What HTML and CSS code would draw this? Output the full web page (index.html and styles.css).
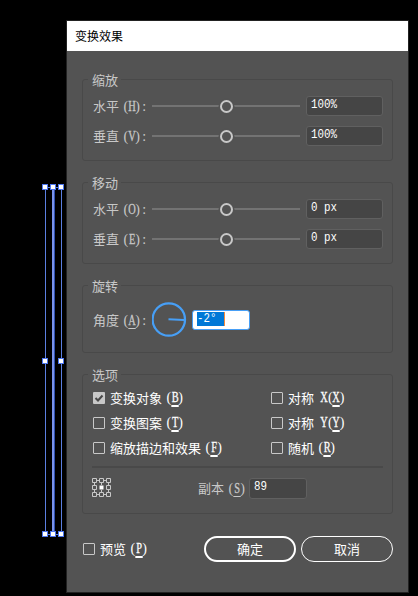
FILE: index.html
```html
<!DOCTYPE html>
<html lang="zh-CN">
<head>
<meta charset="utf-8">
<title>变换效果</title>
<link rel="stylesheet" href="styles.css">
</head>
<body>
<svg class="artwork" width="67" height="596" viewBox="0 0 67 596">
  <path d="M45.5 187V534M61.5 187V534M45 187.5H62M45 534.5H62" stroke="#5b7fe0" fill="none"/>
  <path d="M53 187V534" stroke="#7b93ea" stroke-width="2"/>
  <path d="M54.5 187V534" stroke="#2f4fae"/>
  <g fill="#fff" stroke="#4d76ee">
    <rect x="42.5" y="184.5" width="5" height="5"/><rect x="50.5" y="184.5" width="5" height="5"/><rect x="58.5" y="184.5" width="5" height="5"/>
    <rect x="42.5" y="358.5" width="5" height="5"/><rect x="58.5" y="358.5" width="5" height="5"/>
    <rect x="42.5" y="531.5" width="5" height="5"/><rect x="50.5" y="531.5" width="5" height="5"/><rect x="58.5" y="531.5" width="5" height="5"/>
  </g>
</svg>
<main class="dialog">
  <header class="title">变换效果</header>
  <div class="body">
    <section class="group scale">
      <h2 class="legend">缩放</h2>
      <div class="row"><label class="name">水平<span class="key">(<b>H</b>)<i>:</i></span></label><div class="slider"><i class="knob"></i></div><div class="field"><span class="mono">100%</span></div></div>
      <div class="row"><label class="name">垂直<span class="key">(<b>V</b>)<i>:</i></span></label><div class="slider"><i class="knob"></i></div><div class="field"><span class="mono">100%</span></div></div>
    </section>
    <section class="group move">
      <h2 class="legend">移动</h2>
      <div class="row"><label class="name">水平<span class="key">(<b>O</b>)<i>:</i></span></label><div class="slider"><i class="knob"></i></div><div class="field"><span class="mono">0 px</span></div></div>
      <div class="row"><label class="name">垂直<span class="key">(<b>E</b>)<i>:</i></span></label><div class="slider"><i class="knob"></i></div><div class="field"><span class="mono">0 px</span></div></div>
    </section>
    <section class="group rotate">
      <h2 class="legend">旋转</h2>
      <div class="row">
        <label class="name">角度<span class="key">(<b class="hot">A</b>)<i>:</i></span></label>
        <svg class="dial" width="36" height="36" viewBox="0 0 36 36" fill="none" stroke="#479ff6" stroke-width="2.3"><circle cx="16.8" cy="17.5" r="16.2"/><path d="M16.5 17.3L32 17.9" stroke-width="2"/></svg>
        <div class="field active"><span class="selection"><span class="mono">-2°</span></span></div>
      </div>
    </section>
    <section class="group options">
      <h2 class="legend">选项</h2>
      <div class="checks">
        <label class="check"><svg class="box" width="12" height="12" viewBox="0 0 12 12"><rect width="12" height="12" rx="1" fill="#c8c8c8"/><path d="M2.5 6L5 8.5L9.5 3.5" fill="none" stroke="#484848" stroke-width="2"/></svg>变换对象<span class="key">(<b class="hot">B</b>)</span></label>
        <label class="check"><i class="box empty"></i>对称<span class="key wide"><b>X</b>(<b class="hot">X</b>)</span></label>
        <label class="check"><i class="box empty"></i>变换图案<span class="key">(<b class="hot">T</b>)</span></label>
        <label class="check"><i class="box empty"></i>对称<span class="key wide"><b>Y</b>(<b class="hot">Y</b>)</span></label>
        <label class="check"><i class="box empty"></i>缩放描边和效果<span class="key">(<b class="hot">F</b>)</span></label>
        <label class="check"><i class="box empty"></i>随机<span class="key">(<b class="hot">R</b>)</span></label>
      </div>
      <div class="rule"></div>
      <div class="copies">
        <svg class="anchor" width="19" height="19" viewBox="0 0 19 19" fill="none" stroke="#c8c8c8">
          <path d="M5 2.5h2M12 2.5h2M5 16.5h2M12 16.5h2M2.5 5v2M2.5 12v2M16.5 5v2M16.5 12v2M9.5 5v2M9.5 12v2"/>
          <path d="M.5.5h4v4h-4zM7.5.5h4v4h-4zM14.5.5h4v4h-4zM.5 7.5h4v4h-4zM14.5 7.5h4v4h-4zM.5 14.5h4v4h-4zM7.5 14.5h4v4h-4zM14.5 14.5h4v4h-4z"/>
          <path d="M7.5 7.5h4v4h-4z" fill="#fff" stroke="none"/>
        </svg>
        <label class="copy-name">副本<span class="key">(<b class="hot">S</b>)</span></label>
        <div class="field"><span class="mono">89</span></div>
      </div>
    </section>
    <footer class="footer">
      <label class="check"><i class="box empty"></i>预览<span class="key">(<b class="hot">P</b>)</span></label>
      <button class="button primary">确定</button>
      <button class="button">取消</button>
    </footer>
  </div>
</main>
</body>
</html>
```
FILE: styles.css
```css
* { box-sizing: border-box; }
body {
  margin: 0;
  width: 418px;
  height: 596px;
  overflow: hidden;
  background: #000;
  padding: 20px 0 0 66px;
  font: 13px/18px "Noto Sans CJK SC", sans-serif;
  color: #c8c8c8;
}
.artwork { position: absolute; left: 0; top: 0; }
.dialog {
  width: 343px;
  height: 573px;
  border: 1px solid #222;
  background: #535353;
}
.title {
  height: 30px;
  padding-left: 8px;
  background: #fff;
  color: #000;
  font-size: 12px;
  line-height: 29px;
}
.body { padding: 28px 15px 0; }
.group {
  position: relative;
  width: 311px;
  border: 1px solid #494949;
  border-radius: 3px;
  padding: 16px 0 0 10px;
}
.scale, .move { height: 82px; margin-bottom: 21px; }
.rotate { height: 68px; margin-bottom: 21px; padding-top: 15px; }
.options { height: 140px; }
.legend {
  position: absolute;
  left: 5px;
  top: -9px;
  height: 18px;
  margin: 0;
  padding: 0 3px 0 4px;
  background: #535353;
  font-size: 13px;
  font-weight: 400;
}
.row { display: flex; height: 20px; align-items: center; margin-bottom: 10px; }
.name { width: 59px; flex: none; white-space: nowrap; }
.key {
  display: inline-block;
  margin-left: 4.5px;
  font: 14px/14px "Liberation Serif", serif;
  white-space: nowrap;
}
.key.wide { margin-left: 7px; }
.key b {
  display: inline-block;
  width: 10.2px;
  margin: 0 -1.6px;
  font-weight: 400;
  text-align: center;
  transform: scaleX(.74);
  -webkit-text-stroke: .3px;
}
.key i { font-style: normal; margin-left: 2.5px; }
.key .hot { height: 14px; box-shadow: 0 1px 0 currentColor; }
.check .hot { box-shadow: 0 2px 0 currentColor; }
.slider {
  width: 148px;
  height: 2px;
  background: #737373;
  display: flex;
  justify-content: center;
  align-items: center;
}
.knob {
  width: 13px;
  height: 13px;
  flex: none;
  border: 2px solid #c8c8c8;
  border-radius: 50%;
  background: #535353;
  box-shadow: 0 0 0 1.5px #535353;
}
.field {
  width: 77px;
  height: 20px;
  flex: none;
  margin-left: 6px;
  padding: 1px 0 0 4px;
  border: 1px solid #606060;
  border-radius: 3px;
  background: #454545;
  color: #fff;
  font: 13px/14px "Liberation Mono", monospace;
}
.mono {
  display: block;
  width: max-content;
  white-space: pre;
  transform: scaleX(.833);
  transform-origin: left;
}
.rotate .row { height: 38px; }
.dial { flex: none; margin-top: -1px; }
.field.active {
  width: 58px;
  margin-left: 4px;
  background: #fff;
  border-color: #479ff6;
}
.selection {
  display: block;
  width: 28px;
  height: 14px;
  background: #0078d7;
  border-right: 1px solid #f58a3c;
}
.checks {
  display: grid;
  grid-template-columns: 178px 1fr;
  grid-auto-rows: 25px;
  height: 75px;
  margin-top: -6px;
}
.check { display: flex; align-items: center; color: #fff; white-space: nowrap; }
.box { width: 12px; height: 12px; flex: none; margin-right: 5px; }
.box.empty { border: 1px solid #c8c8c8; border-radius: 1px; }
.rule { width: 291px; height: 2px; background: #494949; margin: 6px 0 0 -1px; }
.copies { display: flex; padding-top: 10px; margin-left: -1px; }
.copy-name { width: 51px; margin: 1px 0 0 87px; white-space: nowrap; }
.copies .field { width: 58px; height: 21px; margin-left: 0; }
.footer { display: flex; height: 26px; margin-top: 22px; padding-left: 1px; }
.footer .check { width: 116px; height: 25px; flex: none; margin-right: 5px; }
.button {
  width: 92px;
  height: 26px;
  margin: 0 5px 0 0;
  padding: 0;
  flex: none;
  border: 1px solid #fff;
  border-radius: 13px;
  background: transparent;
  color: #fff;
  font: 13px/20px "Noto Sans CJK SC", sans-serif;
}
.primary { border-width: 2px; }
```
